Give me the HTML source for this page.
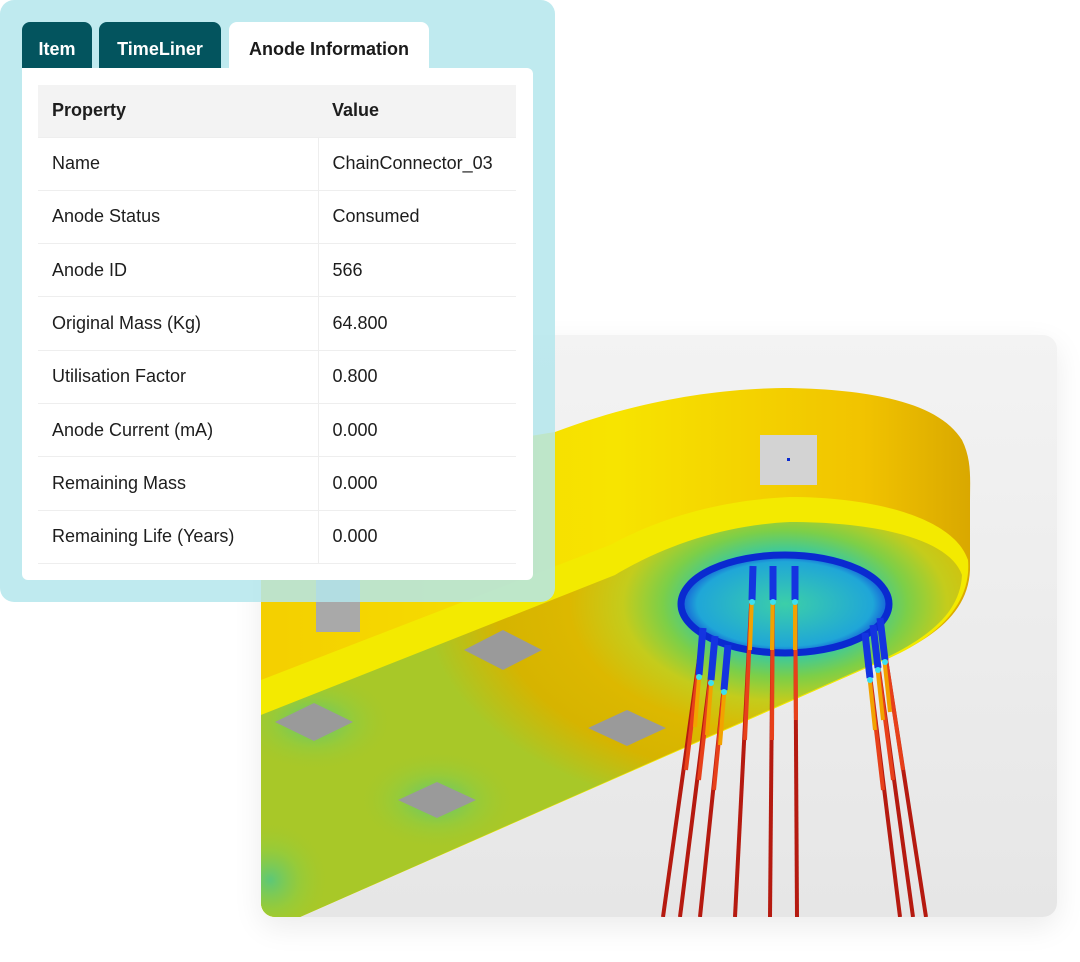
<!DOCTYPE html>
<html><head><meta charset="utf-8"><style>
*{margin:0;padding:0;box-sizing:border-box}
body{width:1080px;height:962px;background:#fff;position:relative;overflow:hidden;font-family:"Liberation Sans",sans-serif}
.card{position:absolute;left:261px;top:335px;width:796px;height:582px;border-radius:14px;overflow:hidden;background:linear-gradient(180deg,#f3f3f3,#e6e6e6);box-shadow:0 10px 30px rgba(0,0,0,.08)}
.panel{position:absolute;left:0;top:0;width:555px;height:602px;border-radius:14px;background:rgba(180,230,236,.85)}
.tab{position:absolute;top:22px;height:46px;border-radius:8px 8px 0 0;font-weight:bold;font-size:18px;line-height:54px;text-align:center}
.dark{background:#03545e;color:#fff}
.white{background:#fff;color:#1a1a1a}
.inner{position:absolute;left:22px;top:68px;width:511px;height:512px;background:#fff;border-radius:0 6px 6px 6px}
table{position:absolute;left:16px;top:17px;width:478px;border-collapse:collapse;font-size:18px;color:#1d1d1d}
td{height:53.3px;border-bottom:1px solid #eeeeee;padding-left:14px}
td:first-child{width:280px;border-right:1px solid #eeeeee}
tr.h td{background:#f3f3f3;font-weight:bold;height:52px;border-right:none}
</style></head><body>
<div class="card"></div>
<svg style="position:absolute;left:0;top:0" width="1080" height="962">
<defs>
<clipPath id="c"><rect x="261" y="335" width="796" height="582" rx="14"/></clipPath>
<clipPath id="bf"><path d="M261,715 L615,575 C665,545 725,525 790,522 C880,522 950,540 962,575 C960,615 925,640 875,663 L300,917 L261,917 Z"/></clipPath>
<radialGradient id="g" cx="785" cy="604" r="360" gradientUnits="userSpaceOnUse" gradientTransform="translate(785 604) scale(1 .6) translate(-785 -604)">
<stop offset=".22" stop-color="#2ec8b0"/><stop offset=".34" stop-color="#7ccf48"/><stop offset=".45" stop-color="#c4cc1c"/><stop offset=".6" stop-color="#dcb800"/><stop offset=".8" stop-color="#d6b400"/><stop offset="1" stop-color="#a8c828"/></radialGradient>
<radialGradient id="halo"><stop offset="0" stop-color="#5cc878"/><stop offset=".5" stop-color="#8fcc40" stop-opacity=".7"/><stop offset="1" stop-color="#a8c828" stop-opacity="0"/></radialGradient>
<linearGradient id="side" x1="0" x2="1"><stop offset="0" stop-color="#f4cf00"/><stop offset=".5" stop-color="#f7e400"/><stop offset=".85" stop-color="#f1c300"/><stop offset="1" stop-color="#d9a800"/></linearGradient>
<radialGradient id="hole" cx="785" cy="604" r="110" gradientUnits="userSpaceOnUse" gradientTransform="translate(785 604) scale(1 .48) translate(-785 -604)"><stop offset="0" stop-color="#3ccfa8"/><stop offset=".8" stop-color="#1fa6d8"/><stop offset="1" stop-color="#1140d8"/></radialGradient>
</defs>
<g clip-path="url(#c)">
<path d="M261,480 L555,432 C640,400 720,388 790,388 C880,390 940,405 962,440 C972,460 970,480 970,500 L970,570 C968,615 930,640 880,662 L300,917 L261,917 Z" fill="url(#side)"/>
<path d="M261,680 L610,545 C660,518 720,500 790,497 C880,497 955,520 968,560 C972,605 935,640 880,662 L300,917 L261,917 Z" fill="#f3ea00"/>
<path d="M261,715 L615,575 C665,545 725,525 790,522 C880,522 950,540 962,575 C960,615 925,640 875,663 L300,917 L261,917 Z" fill="url(#g)"/>
<g clip-path="url(#bf)"><ellipse cx="314" cy="722" rx="80" ry="50" fill="url(#halo)"/><ellipse cx="437" cy="800" rx="80" ry="50" fill="url(#halo)"/><ellipse cx="270" cy="880" rx="60" ry="60" fill="url(#halo)"/></g>
<ellipse cx="785" cy="604" rx="104" ry="49" fill="url(#hole)" stroke="#0a2ad0" stroke-width="7"/>
<rect x="760" y="435" width="57" height="50" fill="#d3d3d3"/><rect x="787" y="458" width="3" height="3" fill="#0a2ad0"/>
<rect x="316" y="580" width="44" height="52" fill="#a9a9a9"/>
<g fill="#9a9a9a">
<polygon points="503,630 542,650 503,670 464,650"/><polygon points="314,703 353,722 314,741 275,722"/><polygon points="627,710 666,728 627,746 588,728"/><polygon points="437,782 476,800 437,818 398,800"/>
</g>
<g stroke-width="4" stroke-linecap="butt" fill="none">
<g stroke="#b51a10"><line x1="753" y1="568" x2="735" y2="917"/><line x1="773" y1="568" x2="770" y2="917"/><line x1="795" y1="568" x2="797" y2="917"/><line x1="703" y1="630" x2="663" y2="917"/><line x1="715" y1="638" x2="680" y2="917"/><line x1="728" y1="647" x2="700" y2="917"/><line x1="865" y1="635" x2="900" y2="917"/><line x1="873" y1="627" x2="913" y2="917"/><line x1="880" y1="620" x2="926" y2="917"/></g>
<g stroke="#e7401a"><line x1="753" y1="568" x2="745" y2="740"/><line x1="773" y1="568" x2="772" y2="740"/><line x1="795" y1="568" x2="796" y2="720"/><line x1="703" y1="630" x2="686" y2="770"/><line x1="715" y1="638" x2="699" y2="780"/><line x1="728" y1="647" x2="714" y2="790"/><line x1="865" y1="635" x2="883" y2="790"/><line x1="873" y1="627" x2="893" y2="780"/><line x1="880" y1="620" x2="903" y2="770"/></g>
<g stroke="#f2a200"><line x1="753" y1="568" x2="750" y2="650"/><line x1="773" y1="568" x2="772" y2="650"/><line x1="795" y1="568" x2="795" y2="650"/><line x1="703" y1="630" x2="695" y2="727"/><line x1="715" y1="638" x2="707" y2="735"/><line x1="728" y1="647" x2="720" y2="745"/><line x1="865" y1="635" x2="875" y2="730"/><line x1="873" y1="627" x2="883" y2="720"/><line x1="880" y1="620" x2="890" y2="712"/></g>
<g stroke="#1434e0" stroke-width="7"><line x1="753" y1="566" x2="752" y2="600"/><line x1="773" y1="566" x2="773" y2="600"/><line x1="795" y1="566" x2="795" y2="600"/><line x1="703" y1="628" x2="699" y2="675"/><line x1="715" y1="636" x2="711" y2="680"/><line x1="728" y1="645" x2="724" y2="690"/><line x1="865" y1="633" x2="870" y2="678"/><line x1="873" y1="625" x2="878" y2="668"/><line x1="880" y1="618" x2="885" y2="660"/></g>
<g fill="#3de0f0"><circle cx="752" cy="602" r="3"/><circle cx="773" cy="602" r="3"/><circle cx="795" cy="602" r="3"/><circle cx="699" cy="677" r="3"/><circle cx="711" cy="683" r="3"/><circle cx="724" cy="692" r="3"/><circle cx="870" cy="680" r="3"/><circle cx="878" cy="670" r="3"/><circle cx="885" cy="662" r="3"/></g>
</g>
</g>
</svg>
<div class="panel"></div>
<div class="tab dark" style="left:22px;width:70px">Item</div>
<div class="tab dark" style="left:99px;width:122px">TimeLiner</div>
<div class="tab white" style="left:229px;width:200px">Anode Information</div>
<div class="inner">
<table>
<tr class="h"><td>Property</td><td>Value</td></tr>
<tr><td>Name</td><td>ChainConnector_03</td></tr>
<tr><td>Anode Status</td><td>Consumed</td></tr>
<tr><td>Anode ID</td><td>566</td></tr>
<tr><td>Original Mass (Kg)</td><td>64.800</td></tr>
<tr><td>Utilisation Factor</td><td>0.800</td></tr>
<tr><td>Anode Current (mA)</td><td>0.000</td></tr>
<tr><td>Remaining Mass</td><td>0.000</td></tr>
<tr><td>Remaining Life (Years)</td><td>0.000</td></tr>
</table>
</div>
</body></html>
